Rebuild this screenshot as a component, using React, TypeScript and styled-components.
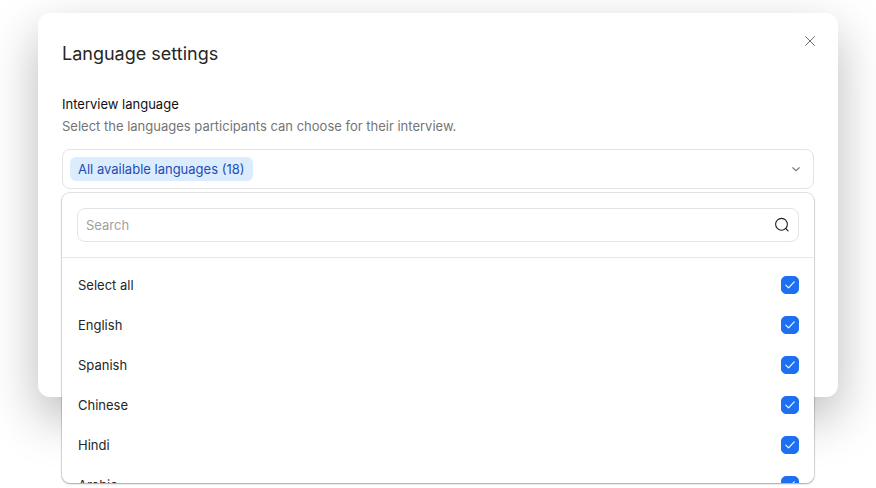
import React, { useState } from "react";
import styled, { createGlobalStyle } from "styled-components";

const GlobalStyle = createGlobalStyle`
  *, *::before, *::after { box-sizing: border-box; }
  body {
    margin: 0;
    background: #fff;
    color: #262626;
    font: 400 13px/20px Inter, "Liberation Sans", sans-serif;
    overflow: hidden;
  }
  button, input { font: inherit; color: inherit; }
`;

const Page = styled.main`
  min-height: 100vh;
  padding: 13px 38px;
`;

const Dialog = styled.section`
  min-height: 384px;
  padding: 16px 24px 24px;
  border-radius: 12px;
  background: #fff;
  box-shadow: 0 20px 50px rgba(0, 0, 0, 0.28);
`;

const Header = styled.header`
  display: flex;
  align-items: flex-start;
  justify-content: space-between;
`;

const Title = styled.h1`
  margin: 12px 0 0;
  font-size: 18px;
  line-height: 26px;
  font-weight: 400;
`;

const CloseButton = styled.button`
  display: flex;
  align-items: center;
  justify-content: center;
  width: 24px;
  height: 24px;
  margin-right: -8px;
  padding: 0;
  border: 0;
  background: none;
  color: #6b6b6b;
  cursor: pointer;
`;

const Field = styled.div`
  margin-top: 27px;
`;

const FieldLabel = styled.h2`
  margin: 0;
  font-size: 13px;
  line-height: 20px;
  font-weight: 400;
  color: #111;
`;

const Hint = styled.p`
  margin: 2px 0 13px;
  color: #757575;
`;

const Picker = styled.div`
  position: relative;
`;

const Trigger = styled.button`
  display: flex;
  align-items: center;
  justify-content: space-between;
  width: 100%;
  height: 40px;
  padding: 0 11px 0 7px;
  border: 1px solid #e3e3e3;
  border-radius: 8px;
  background: #fff;
  color: #808080;
  cursor: pointer;
`;

const Chip = styled.span`
  padding: 2px 8px;
  border-radius: 6px;
  background: #dbecff;
  color: #1f4db3;
`;

const Popover = styled.div`
  position: absolute;
  top: calc(100% + 4px);
  left: 0;
  right: 0;
  border-radius: 8px;
  background: #fff;
  box-shadow: 0 0 0 1px rgba(0, 0, 0, 0.1), 0 1px 2px rgba(0, 0, 0, 0.28);
  overflow: hidden;
`;

const SearchArea = styled.div`
  padding: 15px;
  border-bottom: 1px solid #e8e8e8;
`;

const SearchBox = styled.label`
  display: flex;
  align-items: center;
  height: 34px;
  padding: 0 8px;
  border: 1px solid #e3e3e3;
  border-radius: 8px;
`;

const SearchInput = styled.input`
  flex: 1;
  min-width: 0;
  padding: 0;
  border: 0;
  outline: 0;
  background: none;
  &::placeholder { color: #a0a0a0; opacity: 1; }
`;

const OptionList = styled.ul`
  max-height: 225px;
  margin: 0;
  padding: 7px 0;
  list-style: none;
  overflow-y: auto;
  scrollbar-width: none;
`;

const OptionRow = styled.label`
  display: flex;
  align-items: center;
  justify-content: space-between;
  height: 40px;
  padding: 0 15px 0 16px;
  cursor: pointer;
`;

const CheckFrame = styled.span`
  display: grid;
  width: 18px;
  height: 18px;
  > * { grid-area: 1 / 1; }
  > svg { pointer-events: none; place-self: center; }
`;

const Checkbox = styled.input`
  appearance: none;
  width: 18px;
  height: 18px;
  margin: 0;
  border: 1px solid #c8c8c8;
  border-radius: 5px;
  cursor: pointer;
  &:checked { border-color: #1f6ff2; background: #1f6ff2; }
`;

const CloseIcon = () => (
  <svg width="12" height="12" viewBox="0 0 12 12" fill="none" stroke="currentColor" strokeLinecap="round" aria-hidden="true">
    <path d="M1.5 1.5l9 9M10.5 1.5l-9 9" />
  </svg>
);

const ChevronIcon = () => (
  <svg width="12" height="12" viewBox="0 0 12 12" fill="none" stroke="currentColor" strokeWidth="1.2" strokeLinecap="round" strokeLinejoin="round" aria-hidden="true">
    <path d="M2.8 4.7L6 7.7l3.2-3" />
  </svg>
);

const SearchIcon = () => (
  <svg width="16" height="16" viewBox="0 0 16 16" fill="none" stroke="#222" strokeWidth="1.1" strokeLinecap="round" aria-hidden="true">
    <circle cx="7.5" cy="7.3" r="5.9" />
    <path d="M11.7 11.5l2.4 2.4" />
  </svg>
);

const CheckIcon = () => (
  <svg width="12" height="12" viewBox="0 0 12 12" fill="none" stroke="#fff" strokeWidth="1.1" strokeLinecap="round" strokeLinejoin="round" aria-hidden="true">
    <path d="M1.8 6.2L4.6 8.9l5.6-6" />
  </svg>
);

const LANGUAGES = [
  "English", "Spanish", "Chinese", "Hindi", "Arabic", "French", "German", "Portuguese", "Russian",
  "Japanese", "Korean", "Italian", "Dutch", "Polish", "Turkish", "Swedish", "Vietnamese", "Indonesian",
];

interface OptionProps {
  name: string;
  checked: boolean;
  onToggle: () => void;
}

const Option = ({ name, checked, onToggle }: OptionProps) => (
  <li>
    <OptionRow>
      {name}
      <CheckFrame>
        <Checkbox type="checkbox" checked={checked} onChange={onToggle} />
        {checked && <CheckIcon />}
      </CheckFrame>
    </OptionRow>
  </li>
);

export default function App() {
  const [selected, setSelected] = useState<string[]>(LANGUAGES);
  const [query, setQuery] = useState("");
  const [open, setOpen] = useState(true);
  const all = selected.length === LANGUAGES.length;
  const visible = LANGUAGES.filter((l) => l.toLowerCase().includes(query.toLowerCase()));
  const toggle = (l: string) =>
    setSelected((s) => (s.includes(l) ? s.filter((x) => x !== l) : [...s, l]));

  return (
    <Page>
      <GlobalStyle />
      <Dialog role="dialog" aria-labelledby="dialog-title">
        <Header>
          <Title id="dialog-title">Language settings</Title>
          <CloseButton type="button" aria-label="Close"><CloseIcon /></CloseButton>
        </Header>
        <Field>
          <FieldLabel id="language-label">Interview language</FieldLabel>
          <Hint>Select the languages participants can choose for their interview.</Hint>
          <Picker>
            <Trigger type="button" aria-labelledby="language-label language-value" aria-expanded={open} onClick={() => setOpen(!open)}>
              <Chip id="language-value">
                {all ? "All available languages" : "Selected languages"} ({selected.length})
              </Chip>
              <ChevronIcon />
            </Trigger>
            {open && (
              <Popover>
                <SearchArea>
                  <SearchBox>
                    <SearchInput type="text" placeholder="Search" aria-label="Search" value={query} onChange={(e) => setQuery(e.target.value)} />
                    <SearchIcon />
                  </SearchBox>
                </SearchArea>
                <OptionList>
                  <Option name="Select all" checked={all} onToggle={() => setSelected(all ? [] : LANGUAGES)} />
                  {visible.map((l) => (
                    <Option key={l} name={l} checked={selected.includes(l)} onToggle={() => toggle(l)} />
                  ))}
                </OptionList>
              </Popover>
            )}
          </Picker>
        </Field>
      </Dialog>
    </Page>
  );
}
